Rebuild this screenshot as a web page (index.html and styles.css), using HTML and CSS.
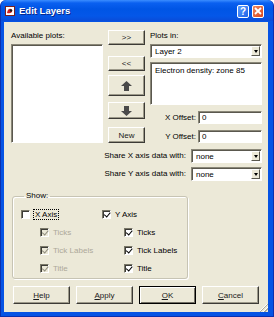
FILE: index.html
```html
<!DOCTYPE html>
<html lang="en">
<head>
  <meta charset="UTF-8">
  <title>Edit Layers</title>
  <link rel="stylesheet" href="styles.css">
</head>
<body>
  <div class="window">
    <div class="titlebar">
      <span class="app-icon">
        <svg width="10" height="10" viewBox="0 0 10 10">
          <rect x="0.5" y="0.5" width="9" height="9" fill="#fff" stroke="#7a2020"/>
          <path d="M2 7 Q3 2 6 3 Q8 4 7 6 Q5 8 2 7 Z" fill="#d42020"/>
          <circle cx="6" cy="4.5" r="1.2" fill="#1a1a1a"/>
        </svg>
      </span>
      <span class="title">Edit Layers</span>
      <span class="caption-btns">
        <span class="cap-btn cap-help">?</span>
        <span class="cap-btn cap-close">
          <svg width="8" height="8" viewBox="0 0 8 8">
            <path d="M1 1 L7 7 M7 1 L1 7" stroke="#fff" stroke-width="1.8"/>
          </svg>
        </span>
      </span>
    </div>

    <div class="client">
      <div class="top">
        <div class="col-avail">
          <div class="label">Available plots:</div>
          <div class="listbox"></div>
        </div>

        <div class="col-moves">
          <div class="btn btn-add">&gt;&gt;</div>
          <div class="btn btn-remove">&lt;&lt;</div>
          <div class="btn btn-up">
            <svg width="11" height="10" viewBox="0 0 11 10">
              <path d="M5.5 0 L11 5 L8 5 L8 10 L3 10 L3 5 L0 5 Z" fill="#4a4a4a"/>
            </svg>
          </div>
          <div class="btn btn-down">
            <svg width="11" height="10" viewBox="0 0 11 10">
              <path d="M3 0 L8 0 L8 5 L11 5 L5.5 10 L0 5 L3 5 Z" fill="#4a4a4a"/>
            </svg>
          </div>
          <div class="btn btn-new">New</div>
        </div>

        <div class="col-plots">
          <div class="label">Plots in:</div>
          <div class="combo">
            <span class="combo-value">Layer 2</span>
            <span class="combo-arrow"></span>
          </div>
          <div class="textbox multi">Electron density: zone 85</div>
          <div class="offset-row">
            <span class="label">X Offset:</span>
            <div class="textbox offset">0</div>
          </div>
          <div class="offset-row">
            <span class="label">Y Offset:</span>
            <div class="textbox offset">0</div>
          </div>
        </div>
      </div>

      <div class="share-row share-x">
        <span class="label">Share X axis data with:</span>
        <div class="combo share">
          <span class="combo-value">none</span>
          <span class="combo-arrow"></span>
        </div>
      </div>
      <div class="share-row share-y">
        <span class="label">Share Y axis data with:</span>
        <div class="combo share">
          <span class="combo-value">none</span>
          <span class="combo-arrow"></span>
        </div>
      </div>

      <fieldset class="show">
        <legend>Show:</legend>
        <div class="check-grid">
          <div class="check"><span class="box"></span><span class="focus">X Axis</span></div>
          <div class="check"><span class="box on"></span>Y Axis</div>

          <div class="check sub disabled"><span class="box on"></span>Ticks</div>
          <div class="check sub sub-r"><span class="box on"></span>Ticks</div>

          <div class="check sub disabled"><span class="box on"></span>Tick Labels</div>
          <div class="check sub sub-r"><span class="box on"></span>Tick Labels</div>

          <div class="check sub disabled"><span class="box on"></span>Title</div>
          <div class="check sub sub-r"><span class="box on"></span>Title</div>
        </div>
      </fieldset>

      <div class="actions">
        <div class="btn action"><u>H</u>elp</div>
        <div class="btn action"><u>A</u>pply</div>
        <div class="btn action default"><u>O</u>K</div>
        <div class="btn action"><u>C</u>ancel</div>
      </div>

      <span class="grip"></span>
    </div>
  </div>
</body>
</html>
```

FILE: styles.css
```css
/* Reset */
body, fieldset, legend {
  margin: 0;
  padding: 0;
}

* {
  box-sizing: border-box;
}

body {
  font-family: 'Liberation Sans', Arial, sans-serif;
  font-size: 8px;
  color: #000;
  background: #fff;
}

/* Window frame */
.window {
  width: 274px;
  height: 317px;
  display: flex;
  flex-direction: column;
  background: #0553e4;
  border: 1px solid #0a2fae;
  border-top: none;
  border-radius: 6px 6px 0 0;
}

.titlebar {
  height: 21px;
  display: flex;
  align-items: center;
  padding: 0 9px 0 4px;
  border-radius: 6px 6px 0 0;
  background: linear-gradient(#3b8dff 0, #0a60f0 3px, #0055e5 9px, #0457e8 16px, #0a4cd8 21px);
}

.app-icon {
  display: flex;
  width: 10px;
  height: 10px;
  margin-right: 4px;
}

.title {
  flex: 1;
  color: #fff;
  font-weight: bold;
  font-size: 9.5px;
  text-shadow: 1px 1px 0 #0a2a8a;
}

.caption-btns {
  display: flex;
  gap: 3px;
  margin-top: 1px;
}

.cap-btn {
  width: 12px;
  height: 13px;
  border: 1px solid #fff;
  border-radius: 2px;
  display: flex;
  align-items: center;
  justify-content: center;
  color: #fff;
  font-weight: bold;
  font-size: 10px;
}

.cap-help {
  background: linear-gradient(135deg, #5a9cff, #1f63e8);
}

.cap-close {
  background: linear-gradient(135deg, #f0865e, #d5461e);
}

/* Client area */
.client {
  flex: 1;
  position: relative;
  margin: 1px 5px 4px 3px;
  background: #ece9d8;
  padding: 8px 0 0 7px;
}

.label {
  line-height: 10px;
  white-space: nowrap;
}

.top {
  display: grid;
  grid-template-columns: 92px 37px 112px;
  column-gap: 5px;
}

.col-avail .label,
.col-plots > .label {
  height: 14px;
  padding-top: 1px;
}

.listbox {
  height: 99px;
  background: #fff;
  border: 1px solid;
  border-color: #8a8778 #fff #fff #8a8778;
  box-shadow: inset 1px 1px 0 #5a584e;
}

/* Buttons */
.btn {
  display: flex;
  align-items: center;
  justify-content: center;
  background: #ece9d8;
  border: 1px solid;
  border-color: #fff #3c3b36 #3c3b36 #fff;
  box-shadow: inset -1px -1px 0 #9d9a8a;
  color: #1a1a1a;
}

.col-moves {
  display: flex;
  flex-direction: column;
}

.btn-add { height: 15px; }
.btn-remove { height: 15px; margin-top: 11px; }
.btn-up { height: 21px; margin-top: 4px; }
.btn-down { height: 17px; margin-top: 6px; }
.btn-new { height: 16px; margin-top: 8px; }

/* Combo and text boxes */
.combo,
.textbox {
  background: #fff;
  border: 1px solid;
  border-color: #8a8778 #fff #fff #8a8778;
  box-shadow: inset 1px 1px 0 #5a584e;
}

.combo {
  height: 14px;
  display: flex;
  align-items: center;
  padding: 0 1px 0 4px;
}

.combo-value {
  flex: 1;
}

.combo-arrow {
  width: 9px;
  height: 10px;
  background: #ece9d8;
  border: 1px solid;
  border-color: #fff #5a584e #5a584e #fff;
  position: relative;
}

.combo-arrow::after {
  content: "";
  position: absolute;
  left: 1.5px;
  top: 3px;
  border-left: 2.5px solid transparent;
  border-right: 2.5px solid transparent;
  border-top: 3px solid #000;
}

.textbox.multi {
  height: 43px;
  margin-top: 4px;
  padding: 3px 4px;
}

.offset-row {
  display: flex;
  justify-content: flex-end;
  align-items: center;
  gap: 2px;
  margin-top: 6px;
}

.textbox.offset {
  width: 64px;
  height: 13px;
  line-height: 11px;
  padding-left: 3px;
}

/* Share rows */
.share-row {
  display: flex;
  justify-content: flex-end;
  align-items: center;
  gap: 5px;
  padding-right: 6px;
}

.share-x { margin-top: 6px; }
.share-y { margin-top: 4px; }

.combo.share {
  width: 71px;
}

/* Show group */
.show {
  width: 176px;
  height: 88px;
  margin: 10px 0 0 1px;
  border: 1px solid #c7c4b4;
  border-radius: 3px;
  box-shadow: inset 1px 1px 0 #fff, 1px 1px 0 #fff;
  padding: 4px 0 0 8px;
}

.show legend {
  line-height: 10px;
  padding: 0 2px;
  margin-left: 3px;
}

.check-grid {
  display: grid;
  grid-template-columns: 81px 1fr;
  grid-auto-rows: 18px;
}

.check {
  display: flex;
  align-items: center;
  gap: 4px;
}

.check.sub { padding-left: 19px; }
.check.sub-r { padding-left: 22px; }

.box {
  width: 9px;
  height: 9px;
  background: #fff;
  border: 1px solid;
  border-color: #7a7868 #fff #fff #7a7868;
  box-shadow: inset 1px 1px 0 #3c3b36;
  position: relative;
}

.box.on::after {
  content: "";
  position: absolute;
  left: 1.5px;
  top: 0.5px;
  width: 2.5px;
  height: 4.5px;
  border-right: 1.6px solid #000;
  border-bottom: 1.6px solid #000;
  transform: rotate(40deg);
  transform-origin: 60% 60%;
}

.check.disabled {
  color: #aca899;
}

.check.disabled .box {
  background: #ece9d8;
}

.check.disabled .box.on::after {
  border-color: #8f8c7e;
}

.focus {
  border: 1px dotted #000;
  padding: 0 1px;
  line-height: 9px;
  margin-left: -1px;
}

/* Dialog buttons */
.actions {
  display: flex;
  gap: 6px;
  margin: 7px 0 0 2px;
}

.btn.action {
  width: 57px;
  height: 18px;
}

.btn.default {
  border-color: #000;
  box-shadow: inset 1px 1px 0 #fff, inset -1px -1px 0 #716f64, inset -2px -2px 0 #ece9d8;
}

.grip {
  position: absolute;
  right: 0;
  bottom: 0;
  width: 8px;
  height: 8px;
  background: linear-gradient(135deg, transparent 40%, #fff 40%, #fff 48%, #aca899 48%, #aca899 56%, transparent 56%, transparent 66%, #fff 66%, #fff 74%, #aca899 74%, #aca899 82%, transparent 82%);
}
```
